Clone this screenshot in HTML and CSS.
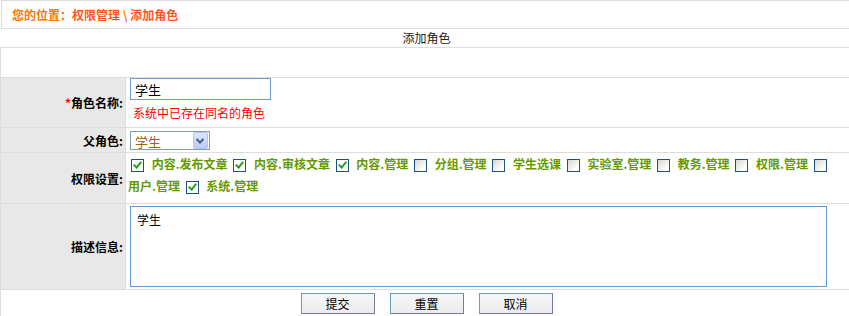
FILE: index.html
```html
<!DOCTYPE html>
<html lang="zh-CN">
<head>
  <meta charset="UTF-8" />
  <title>添加角色</title>
  <link rel="stylesheet" href="styles.css">
</head>
<body>
  <div class="page">
    <div class="crumb">您的位置：<a href="#">权限管理</a> \ <a href="#">添加角色</a></div>

    <table class="form">
      <caption>添加角色</caption>
      <tr class="blank"><td colspan="2"></td></tr>
      <tr class="row-name">
        <th><span class="req">*</span>角色名称:</th>
        <td>
          <input type="text" class="text" value="学生">
          <div class="error">系统中已存在同名的角色</div>
        </td>
      </tr>
      <tr class="row-parent">
        <th>父角色:</th>
        <td>
          <span class="pick">
            <select><option>学生</option></select>
            <i class="pick-btn"><svg width="14" height="15" viewBox="0 0 14 15"><path d="M3.5 6 L7 9.5 L10.5 6" fill="none" stroke="#4a5f86" stroke-width="2"/></svg></i>
          </span>
        </td>
      </tr>
      <tr class="row-perm">
        <th>权限设置:</th>
        <td class="perm"><input type="checkbox" checked> <label>内容.发布文章</label> <input type="checkbox" checked> <label>内容.审核文章</label> <input type="checkbox" checked> <label>内容.管理</label> <input type="checkbox"> <label>分组.管理</label> <input type="checkbox"> <label>学生选课</label> <input type="checkbox"> <label>实验室.管理</label> <input type="checkbox"> <label>教务.管理</label> <input type="checkbox"> <label>权限.管理</label> <input type="checkbox"> <label>用户.管理</label> <input type="checkbox" checked> <label>系统.管理</label></td>
      </tr>
      <tr class="row-desc">
        <th>描述信息:</th>
        <td><textarea class="memo">学生</textarea></td>
      </tr>
      <tr class="row-actions">
        <td colspan="2">
          <div class="actions">
            <button type="button">提交</button>
            <button type="button">重置</button>
            <button type="button">取消</button>
          </div>
        </td>
      </tr>
    </table>
  </div>
</body>
</html>
```

FILE: styles.css
```css
html {
  overflow: hidden;
}

body {
  margin: 0;
  font-family: "Noto Sans CJK SC", "Noto Sans", sans-serif;
  font-size: 12px;
  color: #000;
  background: #fff;
}

.page {
  width: 853px;
}

.crumb {
  margin-left: 1px;
  height: 27px;
  line-height: 27px;
  border: 1px solid #ddd;
  padding-left: 10px;
  font-weight: bold;
  color: #f70;
}

.crumb a {
  color: #f52;
  text-decoration: none;
}

.form {
  width: 100%;
  border-collapse: collapse;
}

.form caption {
  height: 18px;
  line-height: 18px;
  text-align: center;
  color: #222;
}

.form td,
.form th {
  border: 1px solid #ddd;
  padding: 0 2px;
}

.form th {
  width: 120px;
  background: #e8e8e8;
  text-align: right;
  font-weight: bold;
  vertical-align: middle;
}

.req {
  color: #f00;
}

.blank td {
  height: 29px;
}

.row-name td {
  height: 49px;
  vertical-align: top;
}

.text {
  display: block;
  box-sizing: border-box;
  width: 141px;
  height: 22px;
  margin: 0 0 0 2px;
  padding: 0 4px;
  border: 1px solid #6f9ccf;
  font: 13px "Noto Sans CJK SC", sans-serif;
  color: #000;
  outline: none;
}

.error {
  line-height: 26px;
  padding-left: 5px;
  color: #f00;
}

.row-parent td {
  height: 24px;
}

.pick {
  position: relative;
  display: inline-block;
  margin-left: 2px;
  vertical-align: middle;
}

.pick select {
  display: block;
  appearance: none;
  box-sizing: border-box;
  width: 80px;
  height: 19px;
  padding: 0 0 0 4px;
  border: 1px solid #7f9db9;
  background: #fff;
  font: 13px "Noto Sans CJK SC", sans-serif;
  color: #960;
  outline: none;
}

.pick-btn {
  position: absolute;
  right: 2px;
  top: 1px;
  box-sizing: border-box;
  width: 15px;
  height: 17px;
  border: 1px solid #b2c5ef;
  border-radius: 2px;
  background: linear-gradient(#dbe6fd, #b9cdf7);
  pointer-events: none;
}

.pick-btn svg {
  display: block;
  margin: 0 0 0 -1px;
}

.row-perm td {
  height: 50px;
  vertical-align: top;
}

.perm {
  padding-top: 1px;
  padding-left: 3px;
  line-height: 22px;
}

.perm label {
  color: #690;
  font-weight: bold;
  white-space: nowrap;
}

.perm input {
  appearance: none;
  position: relative;
  box-sizing: border-box;
  width: 13px;
  height: 13px;
  margin: 0 5px 0 3px;
  border: 1px solid #1d5281;
  background: linear-gradient(135deg, #d6d6d0, #fff 80%);
  vertical-align: middle;
}

.perm input:checked {
  background: #fff;
}

.perm input:checked::after {
  content: "";
  position: absolute;
  left: 3px;
  top: 0;
  width: 3px;
  height: 6px;
  border: solid #21a121;
  border-width: 0 2px 2px 0;
  transform: rotate(40deg);
}

.row-desc td {
  height: 85px;
}

.memo {
  display: block;
  box-sizing: border-box;
  width: 697px;
  height: 81px;
  margin: 0 0 0 2px;
  padding: 4px 6px;
  border: 1px solid #5b9bd5;
  font: 12px "Noto Sans CJK SC", sans-serif;
  color: #000;
  resize: none;
  outline: none;
}

.row-actions td {
  height: 30px;
  padding-top: 3px;
  vertical-align: top;
}

.actions {
  display: flex;
  justify-content: center;
  gap: 15px;
}

.actions button {
  box-sizing: border-box;
  width: 74px;
  height: 21px;
  padding: 0;
  border: 1px solid;
  border-color: #6c9fa6 #7a78a8 #7a78a8 #6c9fa6;
  background: linear-gradient(#f6f6f6, #ececec);
  font: 12px "Noto Sans CJK SC", sans-serif;
  color: #000;
}
```
